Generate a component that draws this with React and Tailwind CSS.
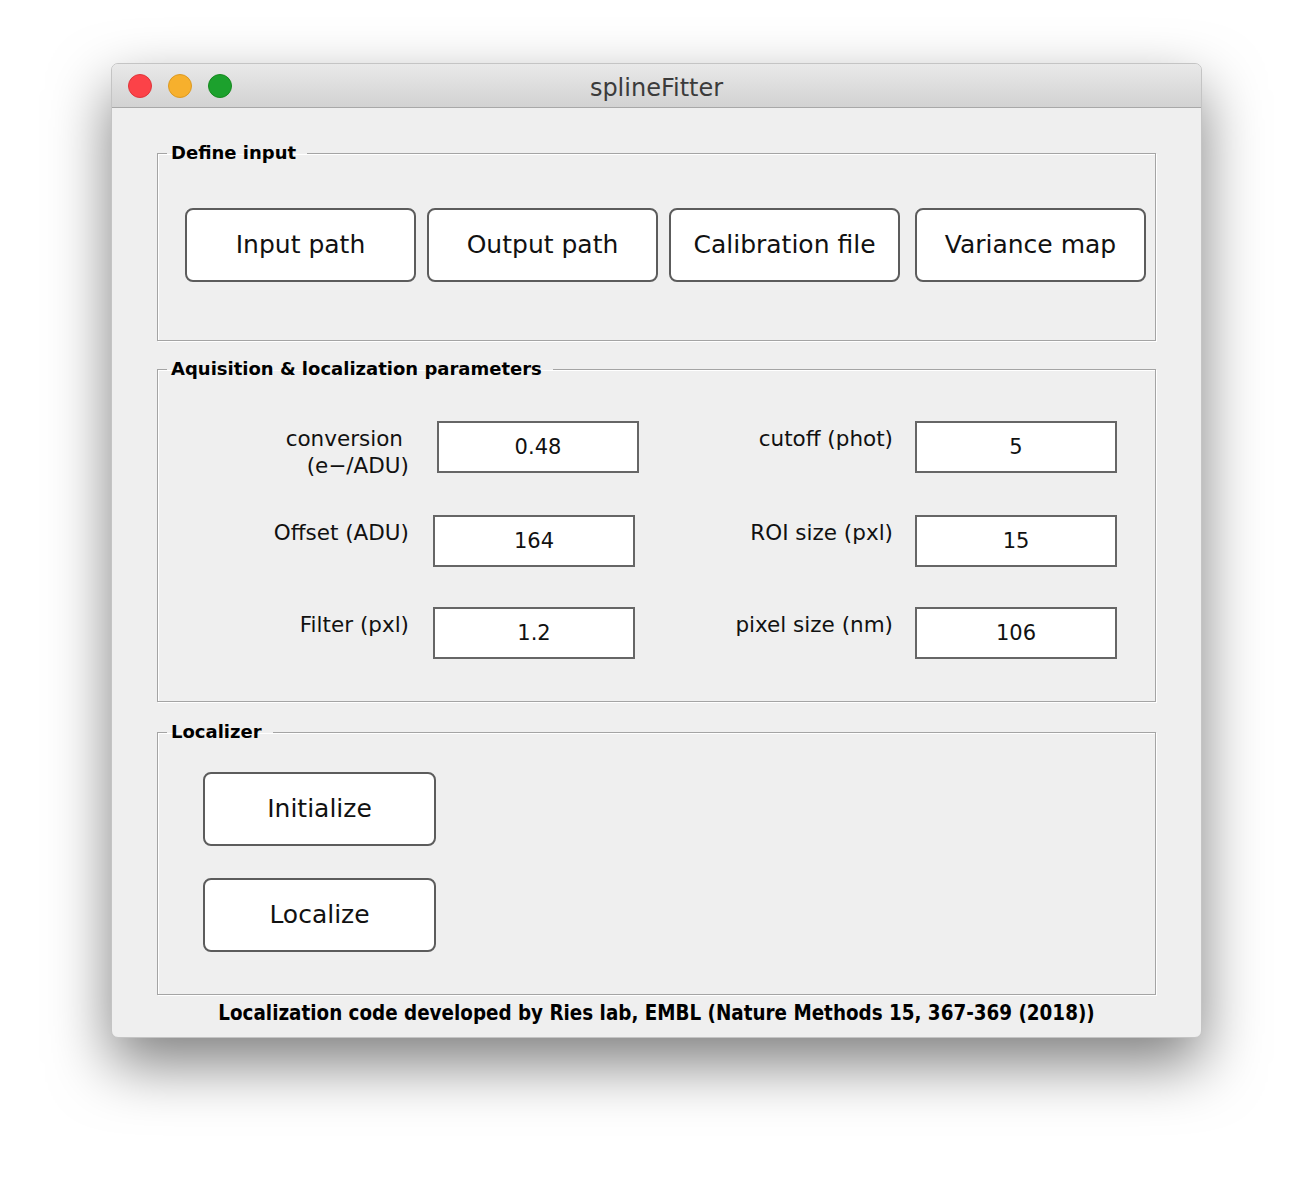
import React from 'react';

const etched = 'border border-[#a4a4a4] shadow-[inset_1px_1px_0_#ffffff,1px_1px_0_#ffffff] min-w-0';
const legendCls = 'ml-[9px] pl-[4px] pr-[11px] text-[18px] leading-[20px] font-bold text-black';

const PushButton = ({ label, className = '' }) => (
    <button
        className={`h-[74px] bg-white border-2 border-[#5c5c5c] rounded-[8px] text-[25px] text-[#111] ${className}`}
    >
        {label}
    </button>
);

const Field = ({ value, className = '' }) => (
    <div className={`w-[202px] h-[52px] shrink-0 bg-white border-2 border-[#666] flex items-center justify-center text-[21px] text-[#111] ${className}`}>
        {value}
    </div>
);

const rows = [
    { left: ['conversion', '(e−/ADU)'], lv: '0.48', right: 'cutoff (phot)', rv: '5', wide: true, gap: '' },
    { left: ['Offset (ADU)'], lv: '164', right: 'ROI size (pxl)', rv: '15', gap: 'mt-[42px]' },
    { left: ['Filter (pxl)'], lv: '1.2', right: 'pixel size (nm)', rv: '106', gap: 'mt-[40px]' },
];

const App = () => {
    return (
        <div className="min-h-[1198px] bg-white pt-[63px] pl-[111px]" style={{ fontFamily: '"DejaVu Sans", sans-serif' }}>
            <div className="w-[1091px] h-[975px] rounded-[7px] border border-[#c4c4c4] bg-[#efefef] overflow-hidden flex flex-col shadow-[0_26px_60px_rgba(0,0,0,0.5)]">
                {/* title bar */}
                <div className="h-[44px] shrink-0 bg-gradient-to-b from-[#e9e9e9] to-[#d2d2d2] border-b border-[#a8a8a8] flex items-center relative">
                    <div className="flex gap-[16px] pl-[16px]">
                        <span className="w-[24px] h-[24px] rounded-full bg-[#fc4248] border border-[#df353a]"></span>
                        <span className="w-[24px] h-[24px] rounded-full bg-[#f7b02d] border border-[#dc9a22]"></span>
                        <span className="w-[24px] h-[24px] rounded-full bg-[#1ca12d] border border-[#16891f]"></span>
                    </div>
                    <div className="absolute inset-0 flex items-center justify-center pt-[4px] text-[24px] text-[#3b3b3b] pointer-events-none">
                        splineFitter
                    </div>
                </div>

                <div className="flex-1 flex flex-col px-[45px]">
                    {/* Define input */}
                    <fieldset className={`${etched} mt-[35px] pt-[45px] pb-[58px]`}>
                        <legend className={legendCls}>Define input</legend>
                        <div className="flex pl-[27px]">
                            <PushButton label="Input path" className="w-[231px]" />
                            <PushButton label="Output path" className="w-[231px] ml-[11px]" />
                            <PushButton label="Calibration file" className="w-[231px] ml-[11px]" />
                            <PushButton label="Variance map" className="w-[231px] ml-[15px]" />
                        </div>
                    </fieldset>

                    {/* parameters */}
                    <fieldset className={`${etched} mt-[18px] pt-[42px] pb-[42px]`}>
                        <legend className={legendCls}>Aquisition &amp; localization parameters</legend>
                        <div className="flex flex-col">
                            {rows.map((r) => (
                                <div key={r.lv} className={`flex items-start h-[52px] text-[21.5px] leading-[27px] text-[#111] ${r.gap}`}>
                                    <div className="w-[251px] shrink-0 text-right mt-[4px]">
                                        {r.left.map((l, i) => (
                                            <div key={l} className={i === 0 && r.left.length > 1 ? 'pr-[6px]' : ''}>{l}</div>
                                        ))}
                                    </div>
                                    <Field value={r.lv} className={r.wide ? 'ml-[28px]' : 'ml-[24px]'} />
                                    <div className={`${r.wide ? 'w-[254px]' : 'w-[258px]'} shrink-0 text-right mt-[4px]`}>{r.right}</div>
                                    <Field value={r.rv} className="ml-[22px]" />
                                </div>
                            ))}
                        </div>
                    </fieldset>

                    {/* Localizer */}
                    <fieldset className={`${etched} mt-[20px] pt-[30px] pb-[42px]`}>
                        <legend className={legendCls}>Localizer</legend>
                        <div className="flex flex-col gap-[32px] pl-[45px]">
                            <PushButton label="Initialize" className="w-[233px]" />
                            <PushButton label="Localize" className="w-[233px]" />
                        </div>
                    </fieldset>

                    <div
                        className="mt-[6px] text-center text-[20.4px] font-bold text-black leading-[24px]"
                        style={{ fontFamily: '"DejaVu Sans Condensed", "DejaVu Sans", sans-serif' }}
                    >
                        Localization code developed by Ries lab, EMBL (Nature Methods 15, 367-369 (2018))
                    </div>
                </div>
            </div>
        </div>
    );
};

export default App;
